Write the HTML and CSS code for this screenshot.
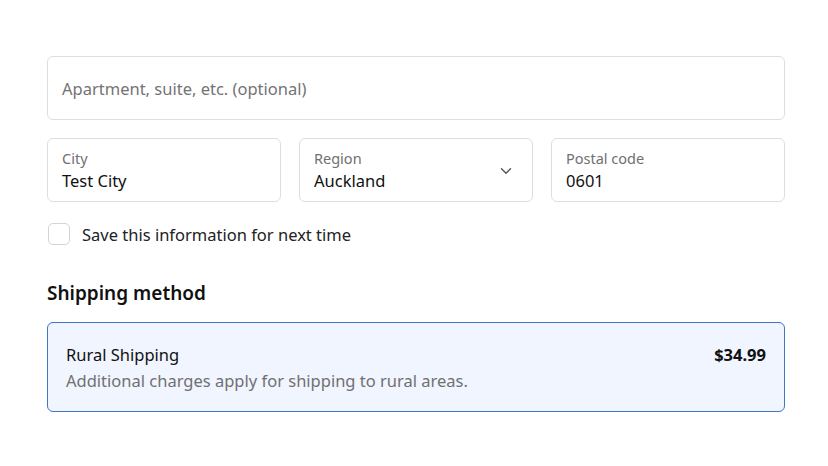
FILE: index.html
```html
<!DOCTYPE html>
<html>
<head>
<meta charset="utf-8">
<link rel="stylesheet" href="styles.css">
</head>
<body>
<div class="form">
  <div class="field single">
    <span class="placeholder">Apartment, suite, etc. (optional)</span>
  </div>
  <div class="row">
    <div class="field">
      <span class="label">City</span>
      <span class="value">Test City</span>
    </div>
    <div class="field select">
      <div class="stack">
        <span class="label">Region</span>
        <span class="value">Auckland</span>
      </div>
      <svg class="chev" width="12" height="8" viewBox="0 0 12 8"><path d="M1.5 1.8 L6 6.2 L10.5 1.8" fill="none" stroke="#555" stroke-width="1.4" stroke-linecap="round" stroke-linejoin="round"/></svg>
    </div>
    <div class="field">
      <span class="label">Postal code</span>
      <span class="value">0601</span>
    </div>
  </div>
  <label class="check">
    <span class="box"></span>
    <span>Save this information for next time</span>
  </label>
  <h2 class="heading">Shipping method</h2>
  <div class="ship">
    <div class="ship-text">
      <div class="ship-name">Rural Shipping</div>
      <div class="ship-desc">Additional charges apply for shipping to rural areas.</div>
    </div>
    <div class="ship-price">$34.99</div>
  </div>
</div>
</body>
</html>
```

FILE: styles.css
```css
html, body {
  margin: 0;
  padding: 0;
  background: #ffffff;
}
body {
  font-family: "Noto Sans", "Open Sans", sans-serif;
  color: #1a1a1a;
}
.form {
  width: 738px;
  margin-left: 47px;
  padding-top: 56px;
}
.field {
  box-sizing: border-box;
  height: 64px;
  border: 1px solid #dedede;
  border-radius: 6px;
  padding: 0 14px;
  display: flex;
  flex-direction: column;
  justify-content: center;
  background: #fff;
}
.placeholder {
  font-size: 16.5px;
  color: #737373;
  line-height: 24px;
  padding-top: 2px;
}
.row {
  display: grid;
  grid-template-columns: 1fr 1fr 1fr;
  gap: 18px;
  margin-top: 18px;
}
.row .field {
  padding-top: 2px;
}
.label {
  font-size: 14.5px;
  color: #707070;
  line-height: 19px;
}
.value {
  font-size: 16.5px;
  color: #111;
  line-height: 24px;
  padding-top: 1px;
}
.field.select {
  flex-direction: row;
  align-items: center;
  justify-content: space-between;
  padding-right: 20px;
}
.stack {
  display: flex;
  flex-direction: column;
}
.chev {
  margin-top: -1px;
}
.check {
  display: flex;
  align-items: center;
  gap: 12px;
  margin-top: 19px;
  margin-left: 1px;
  font-size: 16.5px;
  color: #222;
  line-height: 24px;
}
.check span:last-child {
  padding-top: 2px;
}
.box {
  box-sizing: border-box;
  width: 22px;
  height: 22px;
  border: 1px solid #d4d4d4;
  border-radius: 5px;
  background: #fff;
}
.heading {
  margin: 33px 0 0 0;
  font-size: 19px;
  font-weight: 600;
  color: #111;
  line-height: 26px;
}
.ship {
  box-sizing: border-box;
  margin-top: 16px;
  height: 90px;
  border: 1px solid #3c77bf;
  border-radius: 6px;
  background: #f0f5ff;
  padding: 0 18px;
  display: flex;
  align-items: center;
  justify-content: space-between;
}
.ship-text {
  display: flex;
  flex-direction: column;
  gap: 2px;
  padding-top: 2px;
}
.ship-name {
  font-size: 16.5px;
  color: #111;
  line-height: 24px;
}
.ship-desc {
  font-size: 16.5px;
  color: #707070;
  line-height: 24px;
}
.ship-price {
  align-self: flex-start;
  margin-top: 20px;
  font-size: 16.5px;
  font-weight: 700;
  color: #111;
  line-height: 24px;
}
```
